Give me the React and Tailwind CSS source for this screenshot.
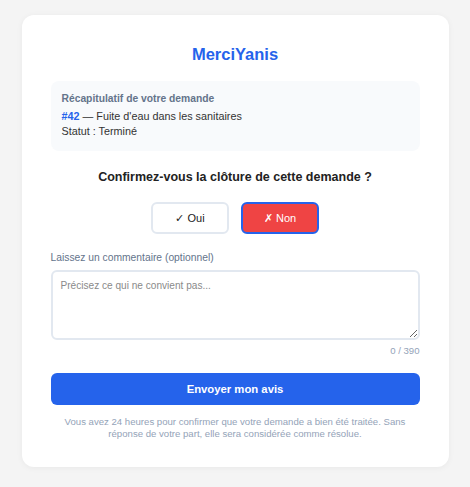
import { useState } from "react";

export default function App() {
  const [choice, setChoice] = useState("non");
  const [comment, setComment] = useState("");

  const baseBtn = "h-[32px] w-[78px] rounded-[6px] border-2 text-[11px] font-medium leading-none";

  return (
    <div className="min-h-[487px] bg-[#f4f4f4] pt-[15px] font-['Liberation_Sans',Arial,sans-serif]">
      <div className="mx-auto w-[427px] rounded-[12px] bg-white px-[29px] pt-[29px] pb-[27px] shadow-[0_1px_6px_rgba(0,0,0,0.05)]">
        <h1 className="text-center text-[16.5px] font-bold leading-[20px] text-[#2563eb]">MerciYanis</h1>

        <div className="mt-[17px] rounded-[8px] bg-[#f8fafc] px-[11px] pt-[11px] pb-[12px]">
          <p className="text-[10.3px] font-bold leading-[14px] text-[#64748b]">Récapitulatif de votre demande</p>
          <p className="mt-[3px] text-[10.8px] leading-[15px] text-[#333]">
            <span className="font-bold text-[#2563eb]">#42</span> — Fuite d'eau dans les sanitaires
          </p>
          <p className="text-[10.8px] leading-[15px] text-[#333]">Statut : Terminé</p>
        </div>

        <h2 className="mt-[17px] text-center text-[12.5px] font-bold leading-[18px] text-[#222]">
          Confirmez-vous la clôture de cette demande ?
        </h2>

        <div className="mt-[16px] flex justify-center gap-[12px]">
          <button
            type="button"
            onClick={() => setChoice("oui")}
            className={
              choice === "oui"
                ? `${baseBtn} border-[#2563eb] bg-[#22c55e] text-white`
                : `${baseBtn} border-[#e2e8f0] bg-white text-[#222]`
            }
          >
            ✓ Oui
          </button>
          <button
            type="button"
            onClick={() => setChoice("non")}
            className={
              choice === "non"
                ? `${baseBtn} border-[#2563eb] bg-[#ef4444] text-white`
                : `${baseBtn} border-[#e2e8f0] bg-white text-[#222]`
            }
          >
            ✗ Non
          </button>
        </div>

        <label className="mt-[17px] block text-[10.3px] leading-[14px] text-[#64748b]">
          Laissez un commentaire (optionnel)
        </label>
        <textarea
          value={comment}
          maxLength={390}
          onChange={(e) => setComment(e.target.value)}
          placeholder="Précisez ce qui ne convient pas..."
          className="mt-[5px] block h-[70px] w-full resize-y rounded-[6px] border-2 border-[#e2e8f0] px-[8px] py-[7px] text-[10.1px] leading-[14px] text-[#333] outline-none placeholder:text-[#8a8a8a]"
        />
        <p className="mt-[5px] text-right text-[9.6px] leading-[12px] text-[#94a3b8]">{comment.length} / 390</p>

        <button
          type="button"
          className="mt-[16px] h-[32px] w-full rounded-[6px] bg-[#2563eb] text-[11.3px] font-bold text-white"
        >
          Envoyer mon avis
        </button>

        <p className="mt-[11px] text-center text-[9.6px] leading-[12px] text-[#94a3b8]">
          Vous avez 24 heures pour confirmer que votre demande a bien été traitée. Sans réponse de votre part, elle
          sera considérée comme résolue.
        </p>
      </div>
    </div>
  );
}
